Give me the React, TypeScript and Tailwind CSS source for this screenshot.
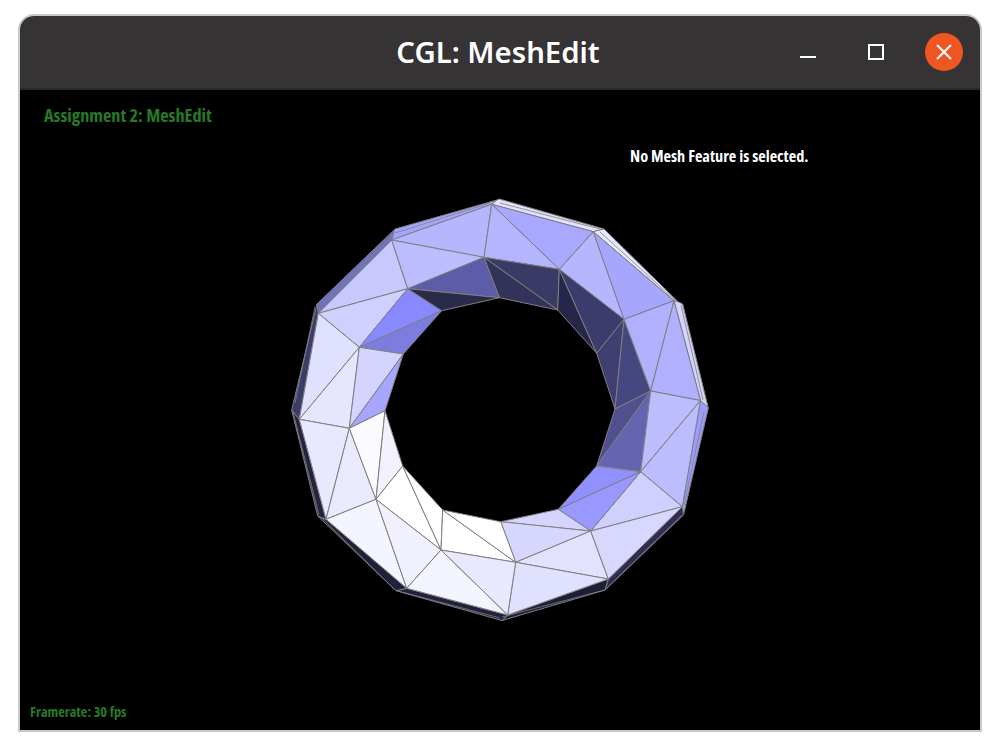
import React from "react";

type Face = { p: number[][]; c: string };

// mesh points, in page pixels
const a1 = [318.3, 313.3], a2 = [391.7, 240], a3 = [491.7, 204.3];
const b1 = [407.7, 288.7], b2 = [484, 257.3];
const c1 = [359.3, 347.3], c2 = [441.7, 310.7], c3 = [499.5, 297.7];
const d1 = [403.3, 354], e1 = [299.3, 419.3], f1 = [349.3, 428.3];
const g = [385, 410.7], h = [376, 499.3], i = [402.7, 466];
const j = [326, 519.3], k = [406.7, 588.3], l = [441, 550], m = [442.7, 510];
const p = [593.3, 231.7], q = [559.3, 269.3], r = [557.7, 310], s = [624, 319.3];
const t = [596.7, 353.3], u = [674, 300.7], v = [650.7, 391], w = [615, 409];
const x = [700.5, 400.5], y = [640.7, 471.7], z = [596.7, 466], aa = [558.3, 509.3];
const bb = [590.7, 531], cc = [500.7, 521.7], dd = [515.7, 562.3], ee = [608.3, 579];
const ff = [682.3, 506.7], gg = [507.7, 615];

const o1 = [317, 304], o2 = [395, 229], o3 = [499.3, 199], o4 = [604, 229];
const o5 = [678, 301.7], o6 = [682.7, 304], o7 = [708.3, 408], o8 = [683.5, 515];
const o9 = [605, 590], o10 = [502, 620.5], o11 = [396, 590.7], o12 = [317.7, 516], o13 = [291.7, 410];

const rim: Face[] = [
  { p: [o1, a1, a2, o2], c: "#7070c0" },
  { p: [o2, a2, a3, [497, 200]], c: "#a4a4ff" },
  { p: [a3, [497, 200], o3, o4, p], c: "#e2e2ff" },
  { p: [p, o4, o5, u], c: "#e8e8ff" },
  { p: [u, o5, o6, o7, x], c: "#d4d4ff" },
  { p: [x, o7, o8, ff], c: "#9c9cff" },
  { p: [ff, o8, o9, ee], c: "#2e2e55" },
  { p: [ee, o9, o10, gg], c: "#1e1e38" },
  { p: [gg, o10, o11, k], c: "#20203c" },
  { p: [k, o11, o12, j], c: "#20203c" },
  { p: [j, o12, o13, e1], c: "#23233f" },
  { p: [e1, o13, o1, a1], c: "#3c3c6c" },
];

const faces: Face[] = [
  { p: [a1, a2, b1], c: "#c8c8ff" },
  { p: [a1, b1, c1], c: "#d0d0ff" },
  { p: [a2, a3, b2], c: "#b6b6ff" },
  { p: [a2, b1, b2], c: "#bcbcff" },
  { p: [b1, c1, c2], c: "#8888ff" },
  { p: [c1, c2, d1], c: "#7d7de0" },
  { p: [b1, b2, c3], c: "#5c5ca8" },
  { p: [b1, c2, c3], c: "#2a2a4a" },
  { p: [a1, c1, e1], c: "#e0e0ff" },
  { p: [c1, e1, f1], c: "#e6e6ff" },
  { p: [c1, f1, d1], c: "#d4d4ff" },
  { p: [f1, d1, g], c: "#a6a6ff" },
  { p: [a3, p, q], c: "#a8a8ff" },
  { p: [a3, q, b2], c: "#b4b4ff" },
  { p: [p, q, s], c: "#b6b6ff" },
  { p: [p, s, u], c: "#a6a6ff" },
  { p: [b2, q, r], c: "#3a3a66" },
  { p: [b2, r, c3], c: "#33335a" },
  { p: [q, r, t], c: "#26264a" },
  { p: [q, t, s], c: "#3c3c6c" },
  { p: [s, t, w], c: "#3e3e70" },
  { p: [s, w, v], c: "#464680" },
  { p: [s, u, v], c: "#b0b0ff" },
  { p: [u, v, x], c: "#b0b0ff" },
  { p: [w, z, v], c: "#50508f" },
  { p: [z, y, v], c: "#6464b0" },
  { p: [v, y, x], c: "#bcbcff" },
  { p: [y, x, ff], c: "#bcbcff" },
  { p: [y, ff, bb], c: "#d0d0ff" },
  { p: [z, y, aa], c: "#9090ff" },
  { p: [aa, y, bb], c: "#9898ff" },
  { p: [aa, cc, bb], c: "#d4d4ff" },
  { p: [cc, bb, dd], c: "#d6d6ff" },
  { p: [dd, bb, ee], c: "#e2e2ff" },
  { p: [bb, ff, ee], c: "#d8d8ff" },
  { p: [dd, ee, gg], c: "#e0e0ff" },
  { p: [e1, f1, j], c: "#e8e8ff" },
  { p: [f1, h, j], c: "#eaeaff" },
  { p: [f1, g, h], c: "#fafaff" },
  { p: [g, h, i], c: "#f2f2ff" },
  { p: [h, i, l], c: "#ffffff" },
  { p: [i, l, m], c: "#ffffff" },
  { p: [m, l, dd], c: "#ffffff" },
  { p: [m, cc, dd], c: "#ffffff" },
  { p: [j, h, k], c: "#f4f4ff" },
  { p: [h, k, l], c: "#f0f0ff" },
  { p: [k, l, gg], c: "#f4f4ff" },
  { p: [l, dd, gg], c: "#e8e8ff" },
];

// fold lines on the far side of the rim
const folds = [
  [[315, 306.7], [295, 403]],
  [[293, 412], [319, 515]],
  [[322, 518], [395, 590]],
  [[398, 591], [500, 618]],
  [[502, 617], [605, 590]],
  [[607, 588], [682, 515]],
  [[684, 505], [704, 412]],
  [[681, 305], [703, 400]],
  [[600, 232], [675, 300]],
  [[500, 203], [600, 229]],
  [[395, 233], [490, 203]],
  [[320, 306], [392, 236]],
];

const pts = (f: number[][]) => f.map((n) => n.join(",")).join(" ");

function Mesh() {
  return (
    <svg viewBox="20 90 960 640" className="block h-full w-full">
      {rim.map((f, n) => (
        <polygon key={n} points={pts(f.p)} fill={f.c} stroke="#808080" strokeWidth="1" strokeLinejoin="round" />
      ))}
      {folds.map((f, n) => (
        <polyline key={n} points={pts(f)} fill="none" stroke="#808080" strokeWidth="0.8" />
      ))}
      {faces.map((f, n) => (
        <polygon key={n} points={pts(f.p)} fill={f.c} stroke="#808080" strokeWidth="1" strokeLinejoin="round" />
      ))}
    </svg>
  );
}

function TitleBar() {
  return (
    <div className="relative flex h-[74px] shrink-0 items-center justify-center border-b-2 border-[#2a2828] bg-[#353333]">
      <span className="mr-1 mt-[2px] font-['Noto_Sans',sans-serif] text-[29.3px] font-semibold text-white">CGL: MeshEdit</span>
      <div className="absolute right-[17px] top-0 flex h-[72px] items-center gap-[42px]">
        <div className="mr-[10px] h-[2px] w-4 translate-y-[5px] bg-white" />
        <div className="h-4 w-4 border-2 border-white" />
        <div className="ml-[-1px] flex h-[38px] w-[38px] items-center justify-center rounded-full bg-[#ee5622]">
          <svg width="16" height="16" viewBox="0 0 16 16">
            <path d="M1 1L15 15M15 1L1 15" stroke="#fff" strokeWidth="2" />
          </svg>
        </div>
      </div>
    </div>
  );
}

export default function App() {
  return (
    <div className="h-[750px] w-[1000px] bg-white px-[18px] pb-[18px] pt-[14px] font-['Open_Sans',sans-serif]">
      <div className="flex h-full flex-col overflow-hidden rounded-t-[16px] border-2 border-[#c8c8c8]">
        <TitleBar />
        <div className="relative min-h-0 flex-1 bg-black">
          <Mesh />
          <span className="absolute left-[24px] top-[14px] text-[18.3px] font-bold leading-[22px] text-[#267a26] [font-stretch:75%]">
            Assignment 2: MeshEdit
          </span>
          <span className="absolute left-[610px] top-[56px] text-[16.3px] font-bold leading-5 text-white [font-stretch:75%]">
            No Mesh Feature is selected.
          </span>
          <span className="absolute bottom-[9px] left-[10px] text-[14.3px] font-bold leading-[18px] text-[#267a26] [font-stretch:75%]">
            Framerate: 30 fps
          </span>
        </div>
      </div>
    </div>
  );
}
